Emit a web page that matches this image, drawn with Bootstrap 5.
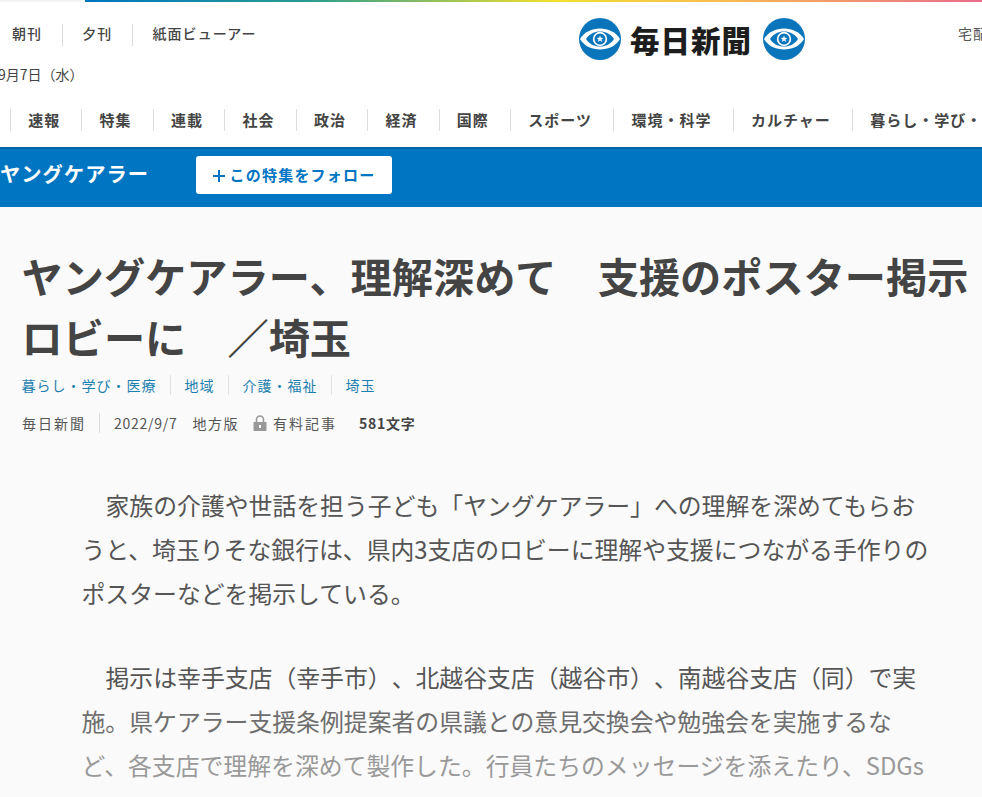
<!DOCTYPE html>
<html lang="ja">
<head>
  <meta charset="UTF-8" />
  <meta name="viewport" content="width=device-width, initial-scale=1" />
  <title>ヤングケアラー、理解深めて 支援のポスター掲示 ロビーに ／埼玉 | 毎日新聞</title>
  <link rel="stylesheet" href="https://cdn.jsdelivr.net/npm/bootstrap@5.3.0/dist/css/bootstrap.min.css" />
  <style>
    /* page is cut off on the left and right, as in the screenshot */
    body {
      background: #fafafa;
      color: #444;
      font-family: "Noto Sans CJK JP", "Noto Sans", sans-serif;
      height: 797px;
      overflow: hidden;
      text-spacing-trim: space-all;
    }
    a { color: inherit; text-decoration: none; }

    /* top bar */
    .rainbow-strip { height: 2px; background: #f4f4f4; }
    .rainbow-fill {
      height: 2px;
      margin-left: 85px;
      background: linear-gradient(90deg, #0075c2 0, #2a9d8f 25%, #f1e02c 52%, #f7b955 72%, #ea6b8a 100%);
    }
    .mast { background: #fff; height: 145px; padding-top: 22px; }

    .sub-links { font-size: 14px; letter-spacing: 1.1px; font-weight: 500; height: 22px; padding-left: 12px; color: #444; }
    .sub-links a { padding-right: 20px; margin-right: 19px; border-right: 1px solid #ddd; line-height: 19px; }
    .sub-links a:last-child { border: 0; }
    .logo-row { position: absolute; top: 16px; left: 579px; }
    .logo-text { font-weight: 900; font-size: 29.5px; color: #1d1d1d; letter-spacing: 1px; line-height: 42px; margin: 0 11px 0 9px; }
    .deliver-link { position: absolute; top: 21px; left: 958px; font-size: 14px; letter-spacing: 1px; white-space: nowrap; color: #555; }
    .today { font-size: 14px; margin: 18px 0 0 -2px; line-height: 20px; color: #444; }

    .cat-nav { margin-top: 25px; font-size: 15px; letter-spacing: 1px; font-weight: 700; height: 22px; white-space: nowrap; color: #444; }
    .cat-nav a { padding: 0 21.3px 0 17.15px; border-left: 1px solid #ddd; line-height: 21px; }
    .cat-nav a:first-child { margin-left: 10px; }

    /* blue band */
    .topic-band { background: #0075c2; border-top: 2px solid #0064a8; height: 60px; color: #fff; padding-bottom: 6px; }
    .topic-name { font-size: 20.3px; letter-spacing: 1px; font-weight: 700; width: 196px; padding-bottom: 4px; }
    .follow-btn {
      background: #fff;
      color: #0075c2;
      font-size: 15px;
      letter-spacing: 1.2px;
      font-weight: 700;
      border: 0;
      border-radius: 3px;
      width: 196px;
      height: 38px;
      padding: 0;
    }
    .follow-btn svg { margin-right: 5px; vertical-align: -1px; }

    /* article */
    .headline { font-size: 41.2px; font-weight: 700; line-height: 61px; color: #444; margin: 38px 0 0 21.5px; white-space: nowrap; }
    .tag-row { font-size: 14px; letter-spacing: 1px; color: #1e7fae; margin: 8px 0 0 21.5px; line-height: 20px; }
    .tag-row a { padding-right: 13px; margin-right: 14px; border-right: 1px solid #e3e3e3; }
    .tag-row a:last-child { border: 0; }
    .meta-row { font-size: 14px; letter-spacing: 2px; margin: 18px 0 0 22px; line-height: 20px; color: #555; }
    .meta-source { padding-right: 13px; margin-right: 14px; border-right: 1px solid #ddd; }
    .meta-date { letter-spacing: .75px; }
    .meta-edition { margin-left: 15px; letter-spacing: 1.5px; }
    .meta-lock { margin: 0 6px 0 14px; }
    .meta-count { font-weight: 700; margin-left: 22px; letter-spacing: .7px; color: #444; }
    .body-text { font-size: 23.85px; line-height: 44px; color: #555; margin: 50px 0 0 81.5px; width: 852px; }
    .body-text p { margin-bottom: 40px; text-indent: 24px; }
    .fade-mid { color: #6e6e6e; }
    .fade-low { color: #999; }
  </style>
</head>
<body>

  <div class="rainbow-strip"><div class="rainbow-fill"></div></div>

  <header class="mast position-relative">
    <div class="sub-links d-flex">
      <a href="#">朝刊</a>
      <a href="#">夕刊</a>
      <a href="#">紙面ビューアー</a>
    </div>
    <div class="logo-row d-flex align-items-center">
      <svg width="42" height="42" viewBox="0 0 42 42">
        <circle cx="21" cy="21" r="21" fill="#0b75bc"/>
        <path d="M1 21C9 7 33 7 41 21C33 35 9 35 1 21Z" fill="#fff"/>
        <path d="M7 21C13 11 29 11 35 21C29 31 13 31 7 21Z" fill="#0b75bc"/>
        <circle cx="21" cy="21" r="7.2" fill="#fff"/>
        <circle cx="21" cy="21" r="5.5" fill="#0b75bc"/>
        <path d="M21 17.5l.9 2.3 2.5.1-2 1.6.7 2.4-2.1-1.4-2.1 1.4.7-2.4-2-1.6 2.5-.1z" fill="#fff"/>
      </svg>
      <span class="logo-text">毎日新聞</span>
      <svg width="42" height="42" viewBox="0 0 42 42">
        <circle cx="21" cy="21" r="21" fill="#0b75bc"/>
        <path d="M1 21C9 7 33 7 41 21C33 35 9 35 1 21Z" fill="#fff"/>
        <path d="M7 21C13 11 29 11 35 21C29 31 13 31 7 21Z" fill="#0b75bc"/>
        <circle cx="21" cy="21" r="7.2" fill="#fff"/>
        <circle cx="21" cy="21" r="5.5" fill="#0b75bc"/>
        <path d="M21 17.5l.9 2.3 2.5.1-2 1.6.7 2.4-2.1-1.4-2.1 1.4.7-2.4-2-1.6 2.5-.1z" fill="#fff"/>
      </svg>
    </div>
    <a class="deliver-link" href="#">宅配購読</a>
    <div class="today">9月7日（水）</div>
    <nav class="cat-nav d-flex">
      <a href="#">速報</a>
      <a href="#">特集</a>
      <a href="#">連載</a>
      <a href="#">社会</a>
      <a href="#">政治</a>
      <a href="#">経済</a>
      <a href="#">国際</a>
      <a href="#">スポーツ</a>
      <a href="#">環境・科学</a>
      <a href="#">カルチャー</a>
      <a href="#">暮らし・学び・医療</a>
    </nav>
  </header>

  <div class="topic-band d-flex align-items-center">
    <div class="topic-name">ヤングケアラー</div>
    <button class="follow-btn" type="button">
      <svg width="12" height="12" viewBox="0 0 12 12"><path d="M6 0v12M0 6h12" stroke="#0075c2" stroke-width="2"/></svg>この特集をフォロー
    </button>
  </div>

  <main>
    <h1 class="headline">ヤングケアラー、理解深めて　支援のポスター掲示<br>ロビーに　／埼玉</h1>
    <div class="tag-row d-flex">
      <a href="#">暮らし・学び・医療</a>
      <a href="#">地域</a>
      <a href="#">介護・福祉</a>
      <a href="#">埼玉</a>
    </div>
    <div class="meta-row d-flex align-items-center">
      <span class="meta-source">毎日新聞</span>
      <span class="meta-date">2022/9/7</span>
      <span class="meta-edition">地方版</span>
      <svg class="meta-lock" width="14" height="16" viewBox="0 0 14 16"><path d="M3.5 7V4.5a3.5 3.5 0 0 1 7 0V7" fill="none" stroke="#999" stroke-width="1.6"/><rect x="0.5" y="7" width="13" height="9" fill="#999"/><rect x="6" y="10" width="2" height="3" fill="#fff"/></svg>
      <span>有料記事</span>
      <span class="meta-count">581文字</span>
    </div>
    <div class="body-text">
      <p>家族の介護や世話を担う子ども「ヤングケアラー」への理解を深めてもらおうと、埼玉りそな銀行は、県内3支店のロビーに理解や支援につながる手作りのポスターなどを掲示している。</p>
      <p>掲示は幸手支店（幸手市）、北越谷支店（越谷市）、南越谷支店（同）で実<br><span class="fade-mid">施。県ケアラー支援条例提案者の県議との意見交換会や勉強会を実施するな</span><br><span class="fade-low">ど、各支店で理解を深めて製作した。行員たちのメッセージを添えたり、SDGs</span></p>
    </div>
  </main>

</body>
</html>
